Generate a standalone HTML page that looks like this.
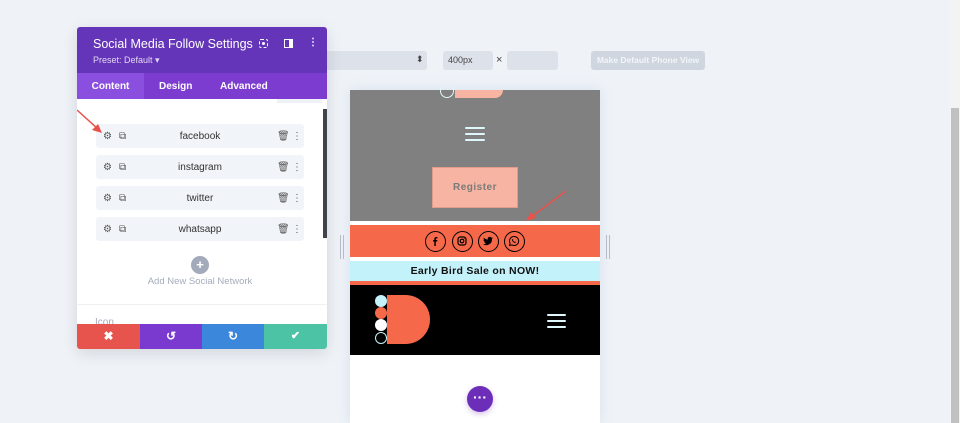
<!DOCTYPE html>
<html><head><style>
*{margin:0;padding:0;box-sizing:border-box}
body{width:960px;height:423px;overflow:hidden;background:#eff3f8;font-family:"Liberation Sans",sans-serif;position:relative}
.a{position:absolute}
.row{position:absolute;left:96px;width:208px;height:24px;background:#f1f4f8;border-radius:3px;font-size:10px;color:#333;text-align:center;line-height:25px}
.ic{position:absolute;top:0;font-size:10px;color:#555}
.soc{position:absolute;top:231px;width:21px;height:21px;border:1.5px solid #000;border-radius:50%}
.soc svg{position:absolute;left:3px;top:3px}
.ham{position:absolute;height:2px;background:#dff6fb;border-radius:1px}
</style></head><body>
<div class="a" style="left:320px;top:51px;width:107px;height:19px;background:#dde2ea;border-radius:3px"></div>
<div class="a" style="left:416px;top:54px;font-size:9px;color:#444">⬍</div>
<div class="a" style="left:443px;top:51px;width:50px;height:19px;background:#dde2ea;border-radius:3px;font-size:9px;color:#444;line-height:19px;padding-left:5px">400px</div>
<div class="a" style="left:496px;top:54px;font-size:11px;color:#444">×</div>
<div class="a" style="left:507px;top:51px;width:51px;height:19px;background:#dde2ea;border-radius:3px"></div>
<div class="a" style="left:591px;top:51px;width:114px;height:19px;background:#cfd6e0;border-radius:3px;font-size:8.5px;color:#f3f5f8;line-height:19px;text-align:center;font-weight:bold">Make Default Phone View</div>
<div class="a" style="left:950px;top:0;width:10px;height:423px;background:#f3f3f3"></div>
<div class="a" style="left:951px;top:108px;width:8px;height:315px;background:#c1c1c1"></div>

<div class="a" style="left:350px;top:90px;width:250px;height:333px;background:#fff;box-shadow:0 0 12px rgba(150,170,210,.25)"></div>
<div class="a" style="left:350px;top:90px;width:250px;height:131px;background:#808080"></div>
<div class="a" style="left:455px;top:90px;width:48px;height:8px;background:#f8b4a2;border-radius:0 0 14px 0"></div>
<div class="a" style="left:440px;top:84px;width:14px;height:14px;border:1.5px solid #dff6fb;border-radius:50%;border-top-color:transparent;background:transparent"></div>
<div class="ham" style="left:465px;top:127px;width:20px"></div>
<div class="ham" style="left:465px;top:133px;width:20px"></div>
<div class="ham" style="left:465px;top:139px;width:20px"></div>
<div class="a" style="left:432px;top:167px;width:86px;height:41px;background:#f8b4a2;border:1px solid #e39c8c;font-size:10px;color:#7a7a7a;letter-spacing:.5px;text-align:center;line-height:40px;font-weight:bold">Register</div>
<div class="a" style="left:350px;top:225px;width:250px;height:32px;background:#f5694a"></div>
<div class="soc" style="left:425px"><svg width="12" height="12" viewBox="0 0 12 12"><path d="M6.8 11V6.5H8.2L8.4 5H6.8V4.1c0-.4.1-.7.7-.7h.9V2.1C8.2 2 7.8 2 7.3 2 6.1 2 5.3 2.7 5.3 4V5H4v1.5h1.3V11z" fill="#000"/></svg></div>
<div class="soc" style="left:452px"><svg width="12" height="12" viewBox="0 0 12 12"><rect x="2" y="2" width="8" height="8" rx="2.2" fill="none" stroke="#000" stroke-width="1.2"/><circle cx="6" cy="6" r="1.8" fill="none" stroke="#000" stroke-width="1.2"/><circle cx="8.2" cy="3.8" r=".5" fill="#000"/></svg></div>
<div class="soc" style="left:478px"><svg width="12" height="12" viewBox="0 0 12 12"><path d="M11 3c-.4.2-.8.3-1.2.3.4-.3.8-.7.9-1.1-.4.2-.9.4-1.3.5a2 2 0 0 0-3.5 1.9C4.2 4.500 2.700 3.700 1.800 2.500c-.5.9-.2 2 .6 2.600-.3 0-.6-.1-.9-.2 0 1 .7 1.800 1.600 2-.3.1-.6.1-.9 0 .3.8 1 1.400 1.900 1.400A4 4 0 0 1 1 9.200 5.800 5.800 0 0 0 10 4.200V4c.4-.3.700-.6 1-1z" fill="#000"/></svg></div>
<div class="soc" style="left:504px"><svg width="12" height="12" viewBox="0 0 12 12"><path d="M6 1.5a4.5 4.5 0 0 0-3.9 6.7L1.5 10.5l2.4-.6A4.5 4.5 0 1 0 6 1.5z" fill="none" stroke="#000" stroke-width="1"/><path d="M4.4 4.2c.2-.3.5-.2.6 0l.3.7c0 .2-.2.4-.3.5.3.7.9 1.200 1.500 1.500.1-.1.3-.4.5-.3l.7.3c.2.1.2.4 0 .6-.4.5-1 .5-1.600.2a4 4 0 0 1-1.900-1.900c-.2-.6-.2-1.200.2-1.600z" fill="#000"/></svg></div>
<div class="a" style="left:350px;top:261px;width:250px;height:20px;background:#c4f2fa;font-size:10.5px;font-weight:bold;text-align:center;line-height:20px;color:#111;letter-spacing:.3px">Early Bird Sale on NOW!</div>
<div class="a" style="left:350px;top:281px;width:250px;height:4px;background:#f5694a"></div>
<div class="a" style="left:350px;top:285px;width:250px;height:70px;background:#000"></div>
<div class="a" style="left:387px;top:295px;width:43px;height:49px;background:#f5694a;border-radius:0 25px 25px 0"></div>
<div class="a" style="left:375px;top:295px;width:12px;height:12px;border-radius:50%;background:#c4f2fa"></div>
<div class="a" style="left:375px;top:307px;width:12px;height:12px;border-radius:50%;background:#f5694a"></div>
<div class="a" style="left:375px;top:319px;width:12px;height:12px;border-radius:50%;background:#fff"></div>
<div class="a" style="left:375px;top:332px;width:12px;height:12px;border-radius:50%;border:1.2px solid #c4f2fa;background:#000"></div>
<div class="ham" style="left:547px;top:314px;width:19px"></div>
<div class="ham" style="left:547px;top:320px;width:19px"></div>
<div class="ham" style="left:547px;top:326px;width:19px"></div>
<div class="a" style="left:467px;top:386px;width:26px;height:26px;border-radius:50%;background:#6c2eb9;color:#fff;text-align:center;line-height:22px;font-size:14px;font-weight:bold;box-shadow:0 2px 6px rgba(108,46,185,.3)">···</div>
<div class="a" style="left:340px;top:235px;width:4px;height:24px;border-left:1px solid #b5bcc8;border-right:1px solid #b5bcc8"></div>
<div class="a" style="left:606px;top:235px;width:4px;height:24px;border-left:1px solid #b5bcc8;border-right:1px solid #b5bcc8"></div>
<svg class="a" style="left:520px;top:188px" width="50" height="40"><line x1="46" y1="3" x2="10" y2="30" stroke="#e8524a" stroke-width="1.5"/><path d="M6 33 L16 30 L11 24Z" fill="#e8524a"/></svg>

<div class="a" style="left:77px;top:27px;width:250px;height:322px;background:#fff;box-shadow:0 4px 16px rgba(0,0,0,.12);border-radius:3px;overflow:hidden">
 <div class="a" style="left:0;top:0;width:250px;height:46px;background:#6435b8"></div>
 <div class="a" style="left:16px;top:10px;font-size:12.5px;color:#fff">Social Media Follow Settings</div>
 <div class="a" style="left:16px;top:28px;font-size:9px;color:#e3d6f5">Preset: Default ▾</div>
 <div class="a" style="left:182px;top:12px;width:9px;height:9px;border:1.5px dashed #fff;border-radius:2px"><div style="position:absolute;left:1.5px;top:1.5px;width:3px;height:3px;background:#fff;border-radius:50%"></div></div>
 <div class="a" style="left:207px;top:12px;width:9px;height:9px;border:1.5px solid #fff;border-right-width:4px"></div>
 <div class="a" style="left:231px;top:10px;font-size:10px;color:#fff;font-weight:bold">⋮</div>
 <div class="a" style="left:0;top:46px;width:250px;height:26px;background:#7d3cd0"></div>
 <div class="a" style="left:0;top:46px;width:67px;height:26px;background:#8b4fe0;color:#fff;font-size:10px;line-height:28px;text-align:center;font-weight:bold">Content</div>
 <div class="a" style="left:82px;top:46px;color:#fff;font-size:10px;line-height:28px;font-weight:bold">Design</div>
 <div class="a" style="left:143px;top:46px;color:#fff;font-size:10px;line-height:28px;font-weight:bold">Advanced</div>
 <div class="a" style="left:200px;top:72px;width:45px;height:4px;background:#eef1f6"></div>
 <div class="a" style="left:246px;top:82px;width:4px;height:129px;background:#3e434c"></div>
 <div class="a" style="left:0;top:277px;width:250px;height:1px;background:#eef0f3"></div>
 <div class="a" style="left:18px;top:290px;font-size:10px;color:#aab">Icon</div>
 <div class="a" style="left:0;top:297px;width:63px;height:25px;background:#e7544d;color:#fff;text-align:center;line-height:25px;font-size:12px;font-weight:bold">✖</div>
 <div class="a" style="left:63px;top:297px;width:62px;height:25px;background:#7b3acf;color:#fff;text-align:center;line-height:25px;font-size:12px;font-weight:bold">↺</div>
 <div class="a" style="left:125px;top:297px;width:62px;height:25px;background:#3b87dc;color:#fff;text-align:center;line-height:25px;font-size:12px;font-weight:bold">↻</div>
 <div class="a" style="left:187px;top:297px;width:63px;height:25px;background:#4cc3a5;color:#fff;text-align:center;line-height:25px;font-size:11px;font-weight:bold">✔</div>
 <div class="a" style="left:114px;top:229px;width:18px;height:18px;border-radius:50%;background:#a3abbb;color:#fff;text-align:center;line-height:17px;font-size:13px;font-weight:bold">+</div>
 <div class="a" style="left:0;top:249px;width:246px;text-align:center;font-size:9.5px;color:#a5adbb">Add New Social Network</div>
</div>
<div class="row" style="top:124px">facebook<span class="ic" style="left:7px">⚙</span><span class="ic" style="left:23px">⧉</span><span class="ic" style="left:181px">🗑︎</span><span class="ic" style="left:196px">⋮</span></div>
<div class="row" style="top:155px">instagram<span class="ic" style="left:7px">⚙</span><span class="ic" style="left:23px">⧉</span><span class="ic" style="left:181px">🗑︎</span><span class="ic" style="left:196px">⋮</span></div>
<div class="row" style="top:186px">twitter<span class="ic" style="left:7px">⚙</span><span class="ic" style="left:23px">⧉</span><span class="ic" style="left:181px">🗑︎</span><span class="ic" style="left:196px">⋮</span></div>
<div class="row" style="top:217px">whatsapp<span class="ic" style="left:7px">⚙</span><span class="ic" style="left:23px">⧉</span><span class="ic" style="left:181px">🗑︎</span><span class="ic" style="left:196px">⋮</span></div>
<svg class="a" style="left:77px;top:108px" width="30" height="30"><line x1="0" y1="2" x2="21" y2="21" stroke="#e8524a" stroke-width="1.5"/><path d="M25 25 L15 22 L21 16Z" fill="#e8524a"/></svg>
</body></html>
